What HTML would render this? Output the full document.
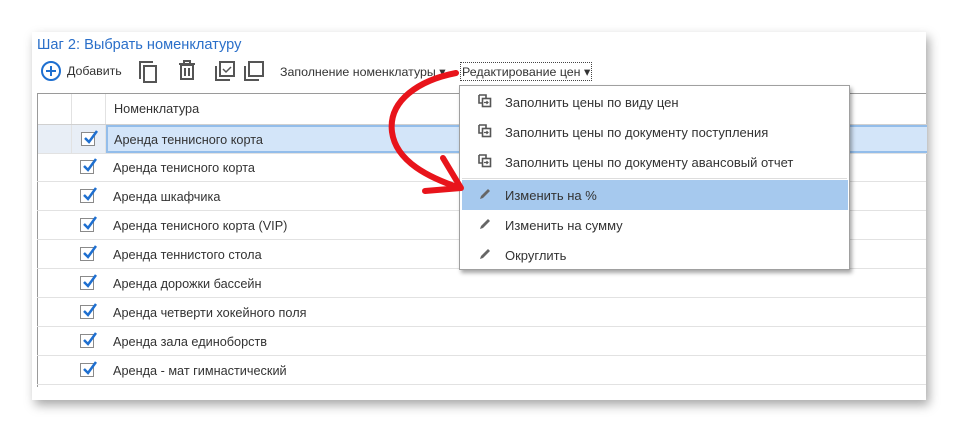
<!DOCTYPE html>
<html><head><meta charset="utf-8"><style>
*{margin:0;padding:0;box-sizing:border-box}
body{width:958px;height:432px;background:#fff;position:relative;overflow:hidden;font-family:"Liberation Sans",Arial,sans-serif;font-size:12.7px;color:#333}
.panel{position:absolute;left:32px;top:32px;width:894px;height:368px;background:#fff;box-shadow:3px 5px 10px rgba(0,0,0,.35)}
.abs{position:absolute}
.title{left:37px;top:37px;font-size:14.6px;color:#2a6fc9}
.grid{position:absolute;left:37px;top:93px;width:889px;height:294px;border-left:1px solid #9a9a9a;border-top:1px solid #9a9a9a}
.row{position:absolute;left:0;width:889px;height:29px;border-bottom:1px solid #e2e2e2}
.c1{position:absolute;left:33px;top:0;bottom:0;border-left:1px solid #e2e2e2}
.c2{position:absolute;left:67px;top:0;bottom:0;border-left:1px solid #e2e2e2}
.txt{position:absolute;left:76px;top:8px}
.cb{position:absolute;left:43px;top:7px;width:14px;height:14px;border:1px solid #8a8a8a;background:#fff}
.cb svg{position:absolute;left:0;top:-4px}
.menu{position:absolute;left:459px;top:85px;width:391px;height:185px;background:#fff;border:1px solid #a0a0a0;box-shadow:2px 3px 4px rgba(0,0,0,.35)}
.mi{position:absolute;left:2px;width:386px;height:29px;font-size:13px}
.mi span{position:absolute;left:43px;top:8px}
.mi svg{position:absolute;left:16px;top:7px}
</style></head><body>
<div class="panel"></div>
<div class="abs title">Шаг 2: Выбрать номенклатуру</div>
<svg class="abs" style="left:40px;top:60px" width="22" height="22" viewBox="0 0 22 22"><circle cx="11" cy="11" r="9" fill="none" stroke="#1e6fd0" stroke-width="2"/><path d="M11 6v10M6 11h10" stroke="#1e6fd0" stroke-width="2"/></svg>
<div class="abs" style="left:67px;top:64px;font-size:12.4px">Добавить</div>
<svg class="abs" style="left:138px;top:60px" width="22" height="24" viewBox="0 0 22 24"><path d="M2 19V2h13" fill="none" stroke="#555" stroke-width="2"/><rect x="6" y="6" width="12" height="16" fill="none" stroke="#555" stroke-width="2"/></svg>
<svg class="abs" style="left:178px;top:60px" width="18" height="22" viewBox="0 0 18 22"><path d="M1 4h16M6 4V1h6v3" fill="none" stroke="#555" stroke-width="2"/><rect x="3" y="5" width="12" height="14" fill="none" stroke="#555" stroke-width="2"/><path d="M7 8v8M11 8v8" stroke="#555" stroke-width="2"/></svg>
<svg class="abs" style="left:214px;top:60px" width="24" height="22" viewBox="0 0 24 22"><path d="M2 6v14h14" fill="none" stroke="#555" stroke-width="2"/><rect x="6" y="2" width="14" height="14" fill="none" stroke="#555" stroke-width="2"/><path d="M9 9l3 3 5-5" fill="none" stroke="#555" stroke-width="1.5"/></svg>
<svg class="abs" style="left:243px;top:60px" width="24" height="22" viewBox="0 0 24 22"><path d="M2 6v14h14" fill="none" stroke="#555" stroke-width="2"/><rect x="6" y="2" width="14" height="14" fill="none" stroke="#555" stroke-width="2"/></svg>
<div class="abs" style="left:280px;top:64px;font-size:12.4px">Заполнение номенклатуры ▾</div>
<div class="abs" style="left:460px;top:62px;border:1px dotted #444;padding:1px 1px;font-size:12.4px">Редактирование цен ▾</div>

<div class="grid">
 <div class="row" style="top:0;height:31px;border-bottom:1px solid #d0d0d0"><div class="c1"></div><div class="c2"></div><div class="txt" style="top:8px">Номенклатура</div></div>
 <div class="row" style="top:31px;background:#e8eef6"><div class="c1"></div><div class="c2"></div><div style="position:absolute;left:68px;top:0;right:0;height:28px;background:#d3e5f9;border:1px solid #93bdea;border-width:2px 0 2px 2px"></div><div class="cb"><svg width="18" height="18"><path d="M3 9l4 4 8-11" fill="none" stroke="#1e6fd0" stroke-width="2.5"/></svg></div><div class="txt" style="top:8px">Аренда теннисного корта</div></div>
</div>
<div class="grid" style="border:none;background:transparent">
 <div class="row" style="top:60px"><div class="cb"><svg width="18" height="18"><path d="M3 9l4 4 8-11" fill="none" stroke="#1e6fd0" stroke-width="2.5"/></svg></div><div class="txt">Аренда тенисного корта</div></div>
 <div class="row" style="top:89px"><div class="cb"><svg width="18" height="18"><path d="M3 9l4 4 8-11" fill="none" stroke="#1e6fd0" stroke-width="2.5"/></svg></div><div class="txt">Аренда шкафчика</div></div>
 <div class="row" style="top:118px"><div class="cb"><svg width="18" height="18"><path d="M3 9l4 4 8-11" fill="none" stroke="#1e6fd0" stroke-width="2.5"/></svg></div><div class="txt">Аренда тенисного корта (VIP)</div></div>
 <div class="row" style="top:147px"><div class="cb"><svg width="18" height="18"><path d="M3 9l4 4 8-11" fill="none" stroke="#1e6fd0" stroke-width="2.5"/></svg></div><div class="txt">Аренда теннистого стола</div></div>
 <div class="row" style="top:176px"><div class="cb"><svg width="18" height="18"><path d="M3 9l4 4 8-11" fill="none" stroke="#1e6fd0" stroke-width="2.5"/></svg></div><div class="txt">Аренда дорожки бассейн</div></div>
 <div class="row" style="top:205px"><div class="cb"><svg width="18" height="18"><path d="M3 9l4 4 8-11" fill="none" stroke="#1e6fd0" stroke-width="2.5"/></svg></div><div class="txt">Аренда четверти хокейного поля</div></div>
 <div class="row" style="top:234px"><div class="cb"><svg width="18" height="18"><path d="M3 9l4 4 8-11" fill="none" stroke="#1e6fd0" stroke-width="2.5"/></svg></div><div class="txt">Аренда зала единоборств</div></div>
 <div class="row" style="top:263px"><div class="cb"><svg width="18" height="18"><path d="M3 9l4 4 8-11" fill="none" stroke="#1e6fd0" stroke-width="2.5"/></svg></div><div class="txt">Аренда - мат гимнастический</div></div>
</div>

<div class="menu">
 <div class="mi" style="top:1px"><svg width="14" height="14" viewBox="0 0 14 14"><path d="M1 1h7v3M1 1v8h3" fill="none" stroke="#555" stroke-width="1.6"/><rect x="4.5" y="4.5" width="8" height="8" fill="none" stroke="#555" stroke-width="1.6"/><path d="M6 8.5h4M8.5 7l1.5 1.5-1.5 1.5" fill="none" stroke="#555" stroke-width="1.2"/></svg><span>Заполнить цены по виду цен</span></div>
 <div class="mi" style="top:31px"><svg width="14" height="14" viewBox="0 0 14 14"><path d="M1 1h7v3M1 1v8h3" fill="none" stroke="#555" stroke-width="1.6"/><rect x="4.5" y="4.5" width="8" height="8" fill="none" stroke="#555" stroke-width="1.6"/><path d="M6 8.5h4M8.5 7l1.5 1.5-1.5 1.5" fill="none" stroke="#555" stroke-width="1.2"/></svg><span>Заполнить цены по документу поступления</span></div>
 <div class="mi" style="top:61px"><svg width="14" height="14" viewBox="0 0 14 14"><path d="M1 1h7v3M1 1v8h3" fill="none" stroke="#555" stroke-width="1.6"/><rect x="4.5" y="4.5" width="8" height="8" fill="none" stroke="#555" stroke-width="1.6"/><path d="M6 8.5h4M8.5 7l1.5 1.5-1.5 1.5" fill="none" stroke="#555" stroke-width="1.2"/></svg><span>Заполнить цены по документу авансовый отчет</span></div>
 <div style="position:absolute;left:2px;right:2px;top:92px;border-top:1px solid #ddd"></div>
 <div class="mi" style="top:94px;height:30px;background:#a6c9ee"><svg width="14" height="14" viewBox="0 0 14 14"><path d="M2 12l1-3 7-7 2 2-7 7z" fill="#666"/></svg><span>Изменить на %</span></div>
 <div class="mi" style="top:124px"><svg width="14" height="14" viewBox="0 0 14 14"><path d="M2 12l1-3 7-7 2 2-7 7z" fill="#666"/></svg><span>Изменить на сумму</span></div>
 <div class="mi" style="top:154px"><svg width="14" height="14" viewBox="0 0 14 14"><path d="M2 12l1-3 7-7 2 2-7 7z" fill="#666"/></svg><span>Округлить</span></div>
</div>

<svg class="abs" style="left:0;top:0" width="958" height="432"><path d="M456 73 C420 80 388 100 392 132 C396 162 430 178 460 188" fill="none" stroke="#e8141b" stroke-width="6" stroke-linecap="round"/><path d="M443 158L461 188L425 191" fill="none" stroke="#e8141b" stroke-width="6" stroke-linecap="round" stroke-linejoin="round"/></svg>
</body></html>
